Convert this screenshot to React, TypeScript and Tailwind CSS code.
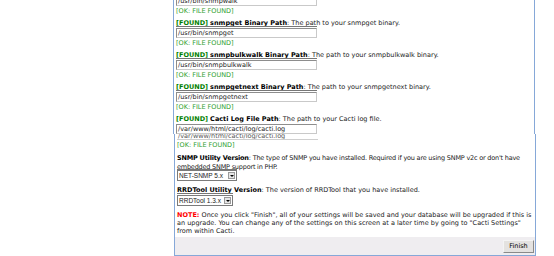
import React from "react";

const font = { fontFamily: '"DejaVu Sans", Verdana, sans-serif' };
const ctl = { fontFamily: '"Liberation Sans", Arial, sans-serif' };

function Input({ value }: { value: string }) {
  return (
    <div className="h-[10px] w-[141px] border border-[#8d8d8d] border-b-[#c9c9c9] border-r-[#c9c9c9] bg-white pl-[1px] text-[6.5px] leading-[8px] text-[#222] overflow-hidden whitespace-nowrap">
      {value}
    </div>
  );
}

function Ok() {
  return <div className="h-[10px] leading-[10px] text-[#2ea02e]">[OK: FILE FOUND]</div>;
}

function Label({ name, desc, line = true }: { name: string; desc: string; line?: boolean }) {
  return (
    <div className="relative h-[10px] leading-[10px] whitespace-nowrap">
      <span className="font-bold text-[#008000]">[FOUND]</span>{" "}
      <span className="font-bold text-black">{name}</span>
      <span className="text-[#222]">: {desc}</span>
      {line && <div className="absolute left-0 bottom-[1px] h-px w-[141px] bg-[#777]" />}
    </div>
  );
}

function Group({ name, desc, value }: { name: string; desc: string; value: string }) {
  return (
    <div className="mt-[2px]">
      <Label name={name} desc={desc} />
      <Input value={value} />
      <Ok />
    </div>
  );
}

function Select({ value, w }: { value: string; w: string }) {
  return (
    <div className={`flex h-[11px] ${w} items-stretch border border-[#7b7b7b] bg-white`}>
      <div className="flex-1 pl-[1px] text-[6.5px] leading-[9px] text-[#222] whitespace-nowrap overflow-hidden" style={ctl}>
        {value}
      </div>
      <div className="m-[1px] flex w-[7px] items-center justify-center border border-[#9a9a9a] bg-[#e6e6e6]">
        <div className="h-0 w-0 border-x-[2px] border-t-[2px] border-x-transparent border-t-black" />
      </div>
    </div>
  );
}

export default function App() {
  return (
    <div className="relative h-[256px] w-[554px] overflow-hidden bg-white text-[6.5px]" style={font}>
      {/* top (stitched) part */}
      <div className="ml-[173px] w-[362px] border-x border-[#86a8d8] pl-[2px]">
        <div className="-mt-[4px]">
          <Input value="/usr/bin/snmpwalk" />
          <Ok />
        </div>
        <Group name="snmpget Binary Path" desc="The path to your snmpget binary." value="/usr/bin/snmpget" />
        <Group name="snmpbulkwalk Binary Path" desc="The path to your snmpbulkwalk binary." value="/usr/bin/snmpbulkwalk" />
        <Group name="snmpgetnext Binary Path" desc="The path to your snmpgetnext binary." value="/usr/bin/snmpgetnext" />
        <div className="mt-[2px]">
          <Label name="Cacti Log File Path" desc="The path to your Cacti log file." line={false} />
          <Input value="/var/www/html/cacti/log/cacti.log" />
        </div>
      </div>
      {/* bottom part */}
      <div className="ml-[174px] w-[362px] border-x border-b border-[#86a8d8]">
        <div className="pl-[2px]">
          <div className="h-[6px] w-[141px] overflow-hidden border-b border-[#cfcfcf] text-[6.5px] leading-[4px] text-[#555] whitespace-nowrap">
            <span className="pl-[1px]">/var/www/html/cacti/log/cacti.log</span>
          </div>
          <Ok />
          <div className="relative mt-[4px] h-[17px] leading-[8.5px] tracking-[-0.2px] text-[#222] whitespace-nowrap">
            <span className="font-bold text-black">SNMP Utility Version</span>: The type of SNMP you have installed. Required if you are using SNMP v2c or don't have
            <br />
            embedded SNMP support in PHP.
            <div className="absolute left-0 bottom-[1px] h-px w-[60px] bg-[#777]" />
          </div>
          <div className="-mt-[1px]">
            <Select value="NET-SNMP 5.x" w="w-[60px]" />
          </div>
          <div className="relative mt-[5px] h-[8px] leading-[8px] whitespace-nowrap text-[#222]">
            <span className="font-bold text-black">RRDTool Utility Version</span>: The version of RRDTool that you have installed.
            <div className="absolute left-0 bottom-0 h-px w-[56px] bg-[#777]" />
          </div>
          <div className="mt-[1px]">
            <Select value="RRDTool 1.3.x" w="w-[56px]" />
          </div>
          <div className="mt-[5px] h-[24px] leading-[8px] text-[#222]">
            <span className="font-bold text-[#ff0000]">NOTE:</span> Once you click "Finish", all of your settings will be saved and your database will be upgraded if this is an upgrade. You can change any of the settings on this screen at a later time by going to "Cacti Settings" from within Cacti.
          </div>
        </div>
        <div className="mt-[2px] flex h-[18px] items-center justify-end bg-[#efedf0] pr-[1px]">
          <button className="h-[13px] w-[31px] border border-[#8a8a8a] border-t-[#f4f4f4] border-l-[#f4f4f4] bg-[#e4e2e0] text-[6.5px] leading-[10px] text-black" style={font}>
            Finish
          </button>
        </div>
      </div>
      <div className="ml-[8px] h-px w-[542px] bg-[#e2e2e2]" />
    </div>
  );
}
